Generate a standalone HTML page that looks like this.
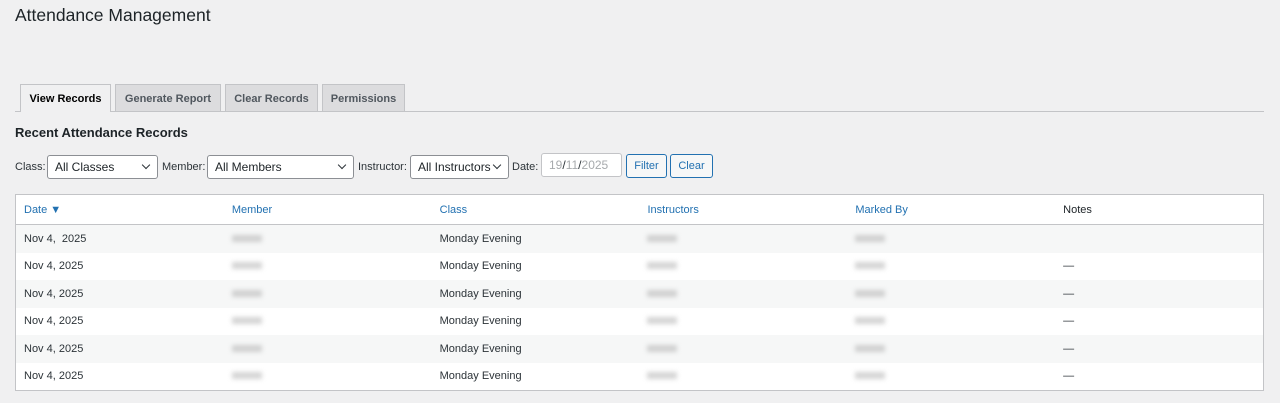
<!DOCTYPE html><html><head><style>
body{margin:0;background:#f0f0f1;font-family:"Liberation Sans",sans-serif;color:#1d2327;width:1280px;height:403px;overflow:hidden;position:relative}
h1{position:absolute;left:15px;top:5px;margin:0;font-size:17.5px;font-weight:400}
.tabs{position:absolute;left:15px;top:111px;width:1249px;border-top:1px solid #c3c4c7}
.tab{position:absolute;top:84px;height:27px;line-height:28px;font-size:11px;font-weight:700;color:#50575e;background:#dcdcde;border:1px solid #c3c4c7;border-bottom:none;text-align:center;box-sizing:border-box}
.tab.on{background:#f0f0f1;color:#000;height:28px}
h2{position:absolute;left:15px;top:125px;margin:0;font-size:13px;font-weight:700}
.lbl{position:absolute;top:161px;font-size:11px;color:#2c3338}
.sel{position:absolute;top:155px;height:24px;border:1px solid #8c8f94;border-radius:3px;background:#fff;box-sizing:border-box;font-size:12px;line-height:22px;padding-left:7px}
.sel:after{content:"";position:absolute;right:8px;top:6px;width:5px;height:5px;border-right:1.3px solid #2c3338;border-bottom:1.3px solid #2c3338;transform:rotate(45deg)}
.sel.d:after{display:none}
.btn{position:absolute;top:154px;height:24px;border:1px solid #2271b1;border-radius:3px;background:#f6f7f7;color:#2271b1;font-size:11px;line-height:22px;text-align:center;box-sizing:border-box}
table{position:absolute;left:15px;top:194px;width:1249px;border:1px solid #c3c4c7;border-collapse:collapse;background:#fff;font-size:11px}
th{text-align:left;font-weight:400;color:#2271b1;height:29px;padding:0 0 0 8px;border-bottom:1px solid #c3c4c7;width:200px}
td{height:27.5px;padding:0 0 0 8px;color:#2c3338}
tr.s td{background:#f6f7f7}
.b{display:inline-block;width:30px;height:7px;background:#aaa;filter:blur(2.5px);opacity:.5}
</style></head><body>
<h1>Attendance Management</h1>
<div class="tabs"></div>
<div class="tab on" style="left:20px;width:91px">View Records</div>
<div class="tab" style="left:115px;width:106px">Generate Report</div>
<div class="tab" style="left:225px;width:93px">Clear Records</div>
<div class="tab" style="left:322px;width:83px">Permissions</div>
<h2>Recent Attendance Records</h2>
<span class="lbl" style="left:15px">Class:</span>
<div class="sel" style="left:47px;width:111px">All Classes</div>
<span class="lbl" style="left:162px">Member:</span>
<div class="sel" style="left:207px;width:147px">All Members</div>
<span class="lbl" style="left:358px">Instructor:</span>
<div class="sel" style="left:410px;width:99px">All Instructors</div>
<span class="lbl" style="left:512px">Date:</span>
<div class="sel d" style="left:541px;width:81px;top:153px;border-color:#c3c4c7;color:#a7aaad">19<span style="color:#2c3338">/</span>11<span style="color:#2c3338">/</span>2025</div>
<div class="btn" style="left:626px;width:41px">Filter</div>
<div class="btn" style="left:670px;width:43px">Clear</div>
<table>
<tr><th>Date ▼</th><th>Member</th><th>Class</th><th>Instructors</th><th>Marked By</th><th style="color:#1d2327">Notes</th></tr>
<tr class="s"><td>Nov 4, &nbsp;2025</td><td><span class="b"></span></td><td>Monday Evening</td><td><span class="b"></span></td><td><span class="b"></span></td><td></td></tr>
<tr><td>Nov 4, 2025</td><td><span class="b"></span></td><td>Monday Evening</td><td><span class="b"></span></td><td><span class="b"></span></td><td>—</td></tr>
<tr class="s"><td>Nov 4, 2025</td><td><span class="b"></span></td><td>Monday Evening</td><td><span class="b"></span></td><td><span class="b"></span></td><td>—</td></tr>
<tr><td>Nov 4, 2025</td><td><span class="b"></span></td><td>Monday Evening</td><td><span class="b"></span></td><td><span class="b"></span></td><td>—</td></tr>
<tr class="s"><td>Nov 4, 2025</td><td><span class="b"></span></td><td>Monday Evening</td><td><span class="b"></span></td><td><span class="b"></span></td><td>—</td></tr>
<tr><td>Nov 4, 2025</td><td><span class="b"></span></td><td>Monday Evening</td><td><span class="b"></span></td><td><span class="b"></span></td><td>—</td></tr>
</table>
</body></html>
